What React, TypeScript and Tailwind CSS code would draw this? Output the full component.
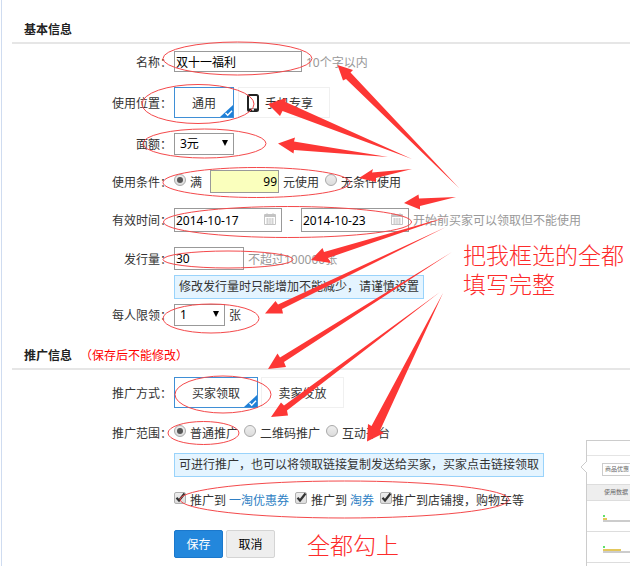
import { useState, type ComponentProps, type ReactNode } from "react";

const ELLIPSES = [
  { cx: 237.5, cy: 58.5, rx: 74.5, ry: 16.5 },
  { cx: 198, cy: 104, rx: 56, ry: 19.5 },
  { cx: 204.5, cy: 143.5, rx: 61.5, ry: 14.5 },
  { cx: 256.5, cy: 182.5, rx: 93.5, ry: 15 },
  { cx: 287.5, cy: 222, rx: 124, ry: 15.5 },
  { cx: 228, cy: 259.5, rx: 65, ry: 8.5 },
  { cx: 211, cy: 318.5, rx: 48, ry: 14.5 },
  { cx: 223, cy: 394.5, rx: 48, ry: 18.5 },
  { cx: 203.5, cy: 433, rx: 35.5, ry: 11.5 },
  { cx: 344.5, cy: 499.5, rx: 164.5, ry: 18.5 },
];

const ARROWS = [
  "337.5,65 353,70 350.5,72.5 459,188 346,79 343,80.5",
  "268,104 286,98 285.5,102 412,159 282.5,111 280,116",
  "278,143.5 295,137.5 294,141.5 388,157 294,150 293.5,153.5",
  "359,178 373,169 372,172.5 412,169 376,178 376,182",
  "404,203 418.5,194.5 419,198.5 456,197 420,206 420,209.5",
  "311,260 322.5,248 324,252 447,217 328,258 331,263",
  "265,313.5 275.5,301 278,304.5 446,227 282,309 283,313.5",
  "268,369 277.5,353.5 280,357.5 452,252 284,362 286,367",
  "271,417 281,402.5 284,405.5 440,292 287,410.5 288,415.5",
  "367,441.5 368,424 371.5,426 443,293 380,430.5 384,433",
];

const inputClass = "border border-[#999] bg-white px-px text-xs text-black outline-none";

function SectionTitle({ title, note }: { title: string; note?: string }) {
  return (
    <div className="flex items-center border-b-2 border-[#e6e6e6] pb-0.5 pl-3">
      <h2 className="text-xs leading-5 font-bold text-[#222]">{title}</h2>
      {note && <span className="ml-2 leading-5 text-[#f00]">{note}</span>}
    </div>
  );
}

function FormRow({ label, htmlFor, children }: { label: string; htmlFor?: string; children: ReactNode }) {
  return (
    <div className="flex items-center">
      <div className="w-40 shrink-0 pt-0.5 text-right">
        {htmlFor ? <label htmlFor={htmlFor}>{label}：</label> : <span>{label}：</span>}
      </div>
      <div className="ml-0.5 flex min-w-0 items-center whitespace-nowrap">{children}</div>
    </div>
  );
}

function Hint({ children }: { children: ReactNode }) {
  return <span className="ml-1 pt-0.5 text-[#999]">{children}</span>;
}

function Tip({ children }: { children: ReactNode }) {
  return (
    <p className="ml-[162px] w-fit border border-[#99d3fb] bg-[#e4f4ff] px-1 leading-[22px] whitespace-nowrap">
      {children}
    </p>
  );
}

function TabButton({ active, className, onClick, children }: { active: boolean; className: string; onClick: () => void; children: ReactNode }) {
  return (
    <button
      type="button"
      aria-pressed={active}
      onClick={onClick}
      className={`relative flex h-[31px] items-center border bg-white pt-0.5 ${active ? "border-[#3f8fd6]" : "border-[#f0f0f0]"} ${className}`}
    >
      {children}
      {active && (
        <svg viewBox="0 0 13 12" className="absolute right-0 bottom-0 h-3 w-[13px]" aria-hidden="true">
          <path d="M13 0V12H0Z" fill="#1f80d8" />
          <path d="M5.5 8l2.2 2.2L12 5.8" fill="none" stroke="#fff" strokeWidth="1.4" />
        </svg>
      )}
    </button>
  );
}

function SelectBox({ id, className, options }: { id: string; className: string; options: string[] }) {
  return (
    <span className="relative">
      <select id={id} className={`block h-[22px] appearance-none border border-[#999] bg-white pl-[5px] text-xs text-black ${className}`}>
        {options.map((option) => <option key={option}>{option}</option>)}
      </select>
      <svg viewBox="0 0 6 6" className="pointer-events-none absolute top-[7px] right-1.5 size-1.5" aria-hidden="true">
        <path d="M0 0H6L3 6Z" fill="#000" />
      </svg>
    </span>
  );
}

function Radio({ label, ...props }: { label: string } & ComponentProps<"input">) {
  return (
    <label className="flex items-center gap-1 pt-0.5">
      <input
        type="radio"
        className="mb-1.5 grid size-3 appearance-none place-items-center rounded-full border border-[#a9a9a9] bg-linear-to-b from-[#eee] to-[#dcdcdc] before:size-1.5 before:rounded-full checked:before:bg-[#555]"
        {...props}
      />
      {label}
    </label>
  );
}

function Checkbox({ id, label }: { id: string; label: string }) {
  return (
    <span className="relative mb-1.5 flex">
      <input
        id={id}
        type="checkbox"
        defaultChecked
        aria-label={label}
        className="peer size-3 appearance-none rounded-xs border border-[#b0b0b0] bg-linear-to-b from-[#eee] to-[#dcdcdc]"
      />
      <svg viewBox="0 0 12 12" className="pointer-events-none invisible absolute inset-0 size-3 peer-checked:visible" aria-hidden="true">
        <path d="M2.5 5.8L5 8.5L10.5 1.5" fill="none" stroke="#333" strokeWidth="2.2" />
      </svg>
    </span>
  );
}

function DateInput({ id, label, value }: { id: string; label: string; value: string }) {
  return (
    <span className="relative">
      <input id={id} aria-label={label} defaultValue={value} className={`block h-6 w-[108px] ${inputClass}`} />
      <svg viewBox="0 0 12 12" className="pointer-events-none absolute top-[5px] right-1.5 size-3" fill="none" stroke="#c4c4c4" aria-hidden="true">
        <path d="M.5 1.5H11.5V11.5H.5Z" />
        <path d="M1 3H11" strokeWidth="2" />
        <path d="M3 0V2M9 0V2M2 6H10M2 8H10M2 10H10" strokeWidth=".8" />
        <path d="M3.5 5V11M6 5V11M8.5 5V11" strokeWidth=".6" />
      </svg>
    </span>
  );
}

function PreviewBar({ fill }: { fill: string }) {
  return (
    <div className="flex h-[31px] flex-col justify-end border-b border-[#ddd] pb-[9px] pl-4">
      <div className="size-0.5 bg-[#5fe06a]" />
      <div className="h-px" />
      <div className={`h-0.5 bg-[#e3c75c] ${fill}`} />
      <div className="h-0.5 bg-[#ccc]" />
    </div>
  );
}

function SidePreview() {
  return (
    <aside className="absolute top-[440px] left-[586px] h-[126px] w-16 border-t border-l border-[#ccc] bg-white text-[6px] whitespace-nowrap text-[#666]">
      <svg viewBox="0 0 7 12" className="absolute top-5 -left-[7px] h-3 w-[7px]" aria-hidden="true">
        <path d="M7 0L1 6L7 12" fill="#fff" stroke="#ccc" />
      </svg>
      <div className="h-[15px] border-b border-[#e4e4e4]" />
      <div className="h-7 pt-[7px] pl-[15px]">
        <div className="border border-[#ccc] pl-0.5 leading-[11px]">商品优惠</div>
      </div>
      <div className="h-[17px] border-y border-[#ddd] bg-[#eee] pl-[17px] leading-[15px]">使用数据</div>
      <PreviewBar fill="w-1" />
      <PreviewBar fill="w-[18px]" />
    </aside>
  );
}

export default function App() {
  const [place, setPlace] = useState("all");
  const [method, setMethod] = useState("buyer");

  return (
    <div className="relative min-h-screen overflow-hidden bg-white pl-px font-['Noto_Sans','Noto_Sans_CJK_SC',sans-serif] text-xs text-[#333]">
      <form className="min-h-screen border-l border-[#cfdcf0] pt-5 pl-2.5" onSubmit={(e) => e.preventDefault()}>
        <SectionTitle title="基本信息" />
        <div className="mt-[7px] flex flex-col gap-[15px]">
          <FormRow label="名称" htmlFor="name">
            <input id="name" defaultValue="双十一福利" className={`h-[21px] w-32 ${inputClass}`} />
            <Hint>10个字以内</Hint>
          </FormRow>
          <FormRow label="使用位置">
            <TabButton active={place === "all"} className="w-[60px] justify-center" onClick={() => setPlace("all")}>通用</TabButton>
            <TabButton active={place === "mobile"} className="ml-1 w-[92px] gap-1.5 pl-2" onClick={() => setPlace("mobile")}>
              <svg viewBox="0 0 12 18" className="mb-0.5 h-[18px] w-3" aria-hidden="true">
                <rect x="1" y="1" width="10" height="16" rx="1.5" fill="#fff" stroke="#222" strokeWidth="2" />
                <path d="M1 14.5H11V17H1Z" fill="#222" />
                <circle cx="6" cy="15.7" r="1" fill="#fff" />
              </svg>
              手机专享
            </TabButton>
          </FormRow>
          <FormRow label="面额" htmlFor="amount">
            <SelectBox id="amount" className="w-[60px]" options={["3元", "5元", "10元"]} />
          </FormRow>
          <FormRow label="使用条件">
            <Radio name="condition" label="满" defaultChecked />
            <input aria-label="满多少元使用" defaultValue="99" className="ml-2 h-[23px] w-[69px] border border-[#999] bg-[#faffbd] px-px text-right text-xs text-black outline-none" />
            <span className="mr-1.5 ml-1 pt-0.5">元使用</span>
            <Radio name="condition" label="无条件使用" />
          </FormRow>
          <FormRow label="有效时间" htmlFor="start">
            <DateInput id="start" label="开始日期" value="2014-10-17" />
            <span className="w-[19px] text-center">-</span>
            <DateInput id="end" label="结束日期" value="2014-10-23" />
            <Hint>开始前买家可以领取但不能使用</Hint>
          </FormRow>
          <FormRow label="发行量" htmlFor="total">
            <input id="total" defaultValue="30" className={`h-[23px] w-[70px] ${inputClass}`} />
            <Hint>不超过100000张</Hint>
          </FormRow>
        </div>
        <div className="my-[5px]">
          <Tip>修改发行量时只能增加不能减少，请谨慎设置</Tip>
        </div>
        <FormRow label="每人限领" htmlFor="limit">
          <SelectBox id="limit" className="w-[51px]" options={["1", "2", "3"]} />
          <span className="ml-1 pt-0.5">张</span>
        </FormRow>

        <div className="mt-5">
          <SectionTitle title="推广信息" note="（保存后不能修改）" />
        </div>
        <div className="mt-[7px] flex flex-col gap-[15px]">
          <FormRow label="推广方式">
            <TabButton active={method === "buyer"} className="w-[84px] justify-center" onClick={() => setMethod("buyer")}>买家领取</TabButton>
            <TabButton active={method === "seller"} className="ml-[3px] w-[83px] justify-center" onClick={() => setMethod("seller")}>卖家发放</TabButton>
          </FormRow>
          <FormRow label="推广范围">
            <div className="flex gap-1.5">
              <Radio name="range" label="普通推广" defaultChecked />
              <Radio name="range" label="二维码推广" />
              <Radio name="range" label="互动平台" />
            </div>
          </FormRow>
        </div>
        <div className="mt-2.5 mb-[15px]">
          <Tip>可进行推广，也可以将领取链接复制发送给买家，买家点击链接领取</Tip>
        </div>
        <div className="ml-[162px] flex items-center whitespace-nowrap">
          <Checkbox id="etao" label="推广到一淘优惠券" />
          <label htmlFor="etao" className="ml-1">推广到</label>
          <a href="#etao" className="ml-[3px] text-[#2f7fc4]">一淘优惠券</a>
          <span className="w-1.5" />
          <Checkbox id="quan" label="推广到淘券" />
          <label htmlFor="quan" className="ml-1">推广到</label>
          <a href="#quan" className="ml-[3px] text-[#2f7fc4]">淘券</a>
          <span className="w-1.5" />
          <Checkbox id="shop" label="推广到店铺搜，购物车等" />
          <label htmlFor="shop">推广到店铺搜，购物车等</label>
        </div>
        <div className="mt-5 ml-[162px] flex gap-[3px]">
          <button type="submit" className="h-7 w-[49px] rounded-xs border border-[#1b78cc] bg-[#2387dc] pt-0.5 text-white">保存</button>
          <button type="button" className="h-7 w-[49px] rounded-xs border border-[#d4d4d4] bg-[#eee] pt-0.5 text-black">取消</button>
        </div>
      </form>

      <SidePreview />

      <svg viewBox="0 0 630 566" className="pointer-events-none absolute top-0 left-0 h-[566px] w-[630px]" aria-hidden="true">
        {ELLIPSES.map((e) => <ellipse key={`${e.cx}-${e.cy}`} {...e} fill="none" stroke="#f4494b" />)}
        {ARROWS.map((points) => <polygon key={points} points={points} fill="#fd3735" />)}
      </svg>
      <p className="absolute top-[240px] left-[463px] w-[162px] font-['Noto_Sans_CJK_SC',serif] text-[23px] leading-[29px] font-light text-[#fd2b2b]">
        把我框选的全都填写完整
      </p>
      <p className="absolute top-[530px] left-[307px] font-['Noto_Sans_CJK_SC',serif] text-[23px] leading-[29px] font-light text-[#fd2b2b]">
        全都勾上
      </p>
    </div>
  );
}
